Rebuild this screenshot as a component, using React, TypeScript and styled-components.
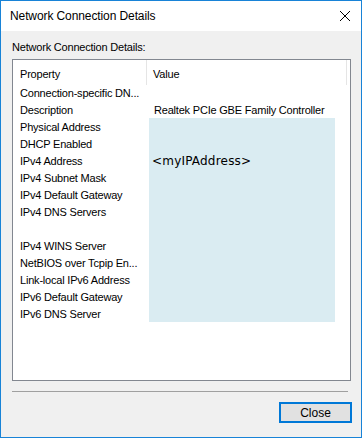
import React from 'react';
import styled, { createGlobalStyle } from 'styled-components';

interface Detail {
  property: string;
  value: string;
}

const Details: Detail[] = [
  { property: 'Connection-specific DN...', value: '' },
  { property: 'Description', value: 'Realtek PCIe GBE Family Controller' },
  { property: 'Physical Address', value: '' },
  { property: 'DHCP Enabled', value: '' },
  { property: 'IPv4 Address', value: '' },
  { property: 'IPv4 Subnet Mask', value: '' },
  { property: 'IPv4 Default Gateway', value: '' },
  { property: 'IPv4 DNS Servers', value: '' },
  { property: '', value: '' },
  { property: 'IPv4 WINS Server', value: '' },
  { property: 'NetBIOS over Tcpip En...', value: '' },
  { property: 'Link-local IPv6 Address', value: '' },
  { property: 'IPv6 Default Gateway', value: '' },
  { property: 'IPv6 DNS Server', value: '' },
];

const App: React.FC = () => (
  <>
    <GlobalStyle />
    <Window>
      <TitleBar>
        <Title>Network Connection Details</Title>
        <CloseIcon width="12" height="12" viewBox="0 0 12 12">
          <path d="M1 1 L11 11 M11 1 L1 11" stroke="#000" strokeWidth="1" fill="none" />
        </CloseIcon>
      </TitleBar>
      <Body>
        <Label>Network Connection Details:</Label>
        <ListBox>
          <HeaderRow>
            <HeaderCell first>Property</HeaderCell>
            <HeaderCell>Value</HeaderCell>
          </HeaderRow>
          {Details.map((d, i) => (
            <Row key={i}>
              <Cell first>{d.property}</Cell>
              <Cell>{d.value}</Cell>
            </Row>
          ))}
          <Redaction>&lt;myIPAddress&gt;</Redaction>
        </ListBox>
        <Separator />
        <Footer>
          <Button>Close</Button>
        </Footer>
      </Body>
    </Window>
  </>
);

const GlobalStyle = createGlobalStyle`
  body {
    margin: 0;
    background: #fff;
  }
`;

const Window = styled.div`
  width: 362px;
  height: 438px;
  box-sizing: border-box;
  border: 1px solid #1883d7;
  display: flex;
  flex-direction: column;
  font-family: 'Liberation Sans', Arial, sans-serif;
  color: #000;
`;

const TitleBar = styled.div`
  height: 30px;
  flex-shrink: 0;
  background: #fff;
  display: flex;
  align-items: center;
  justify-content: space-between;
  padding: 0 9px 0 9px;
`;

const Title = styled.span`
  font-size: 12px;
  letter-spacing: -0.1px;
`;

const CloseIcon = styled.svg`
  display: block;
  margin-right: 1px;
`;

const Body = styled.div`
  flex: 1;
  background: #f0f0f0;
  padding: 9px 10px 0 11px;
  display: flex;
  flex-direction: column;
`;

const Label = styled.div`
  font-size: 11px;
  letter-spacing: -0.2px;
  line-height: 15px;
  height: 15px;
  margin-bottom: 4px;
`;

const ListBox = styled.div`
  position: relative;
  width: 339px;
  height: 322px;
  box-sizing: border-box;
  border: 1px solid #828790;
  background: #fff;
  font-size: 11px;
  letter-spacing: -0.2px;
`;

const HeaderRow = styled.div`
  display: flex;
  height: 25px;
`;

const HeaderCell = styled.div<{ first?: boolean }>`
  width: ${p => (p.first ? '134px' : '200px')};
  border-right: 1px solid #e5e5e5;
  padding-left: ${p => (p.first ? '7px' : '6px')};
  box-sizing: border-box;
  display: flex;
  align-items: center;
  padding-top: 2px;
`;

const Row = styled.div`
  display: flex;
  height: 17px;
  line-height: 17px;
`;

const Cell = styled.div<{ first?: boolean }>`
  width: ${p => (p.first ? '135px' : '200px')};
  padding-left: ${p => (p.first ? '7px' : '6px')};
  box-sizing: border-box;
  white-space: nowrap;
  overflow: hidden;
`;

const Redaction = styled.div`
  position: absolute;
  left: 136px;
  top: 58px;
  width: 186px;
  height: 204px;
  background: #daecf2;
  padding: 36px 0 0 3px;
  box-sizing: border-box;
  font-family: 'DejaVu Sans', sans-serif;
  font-size: 12px;
  letter-spacing: 0.2px;
  line-height: 15px;
`;

const Separator = styled.div`
  width: 336px;
  height: 1px;
  background: #a0a0a0;
  margin-top: 10px;
`;

const Footer = styled.div`
  display: flex;
  justify-content: flex-end;
  padding-top: 10px;
`;

const Button = styled.button`
  width: 73px;
  height: 21px;
  box-sizing: border-box;
  border: 2px solid #0078d7;
  background: #e1e1e1;
  font-family: 'Liberation Sans', Arial, sans-serif;
  font-size: 12px;
  padding: 0;
  margin-right: -1px;
  color: #000;
`;

export default App;
